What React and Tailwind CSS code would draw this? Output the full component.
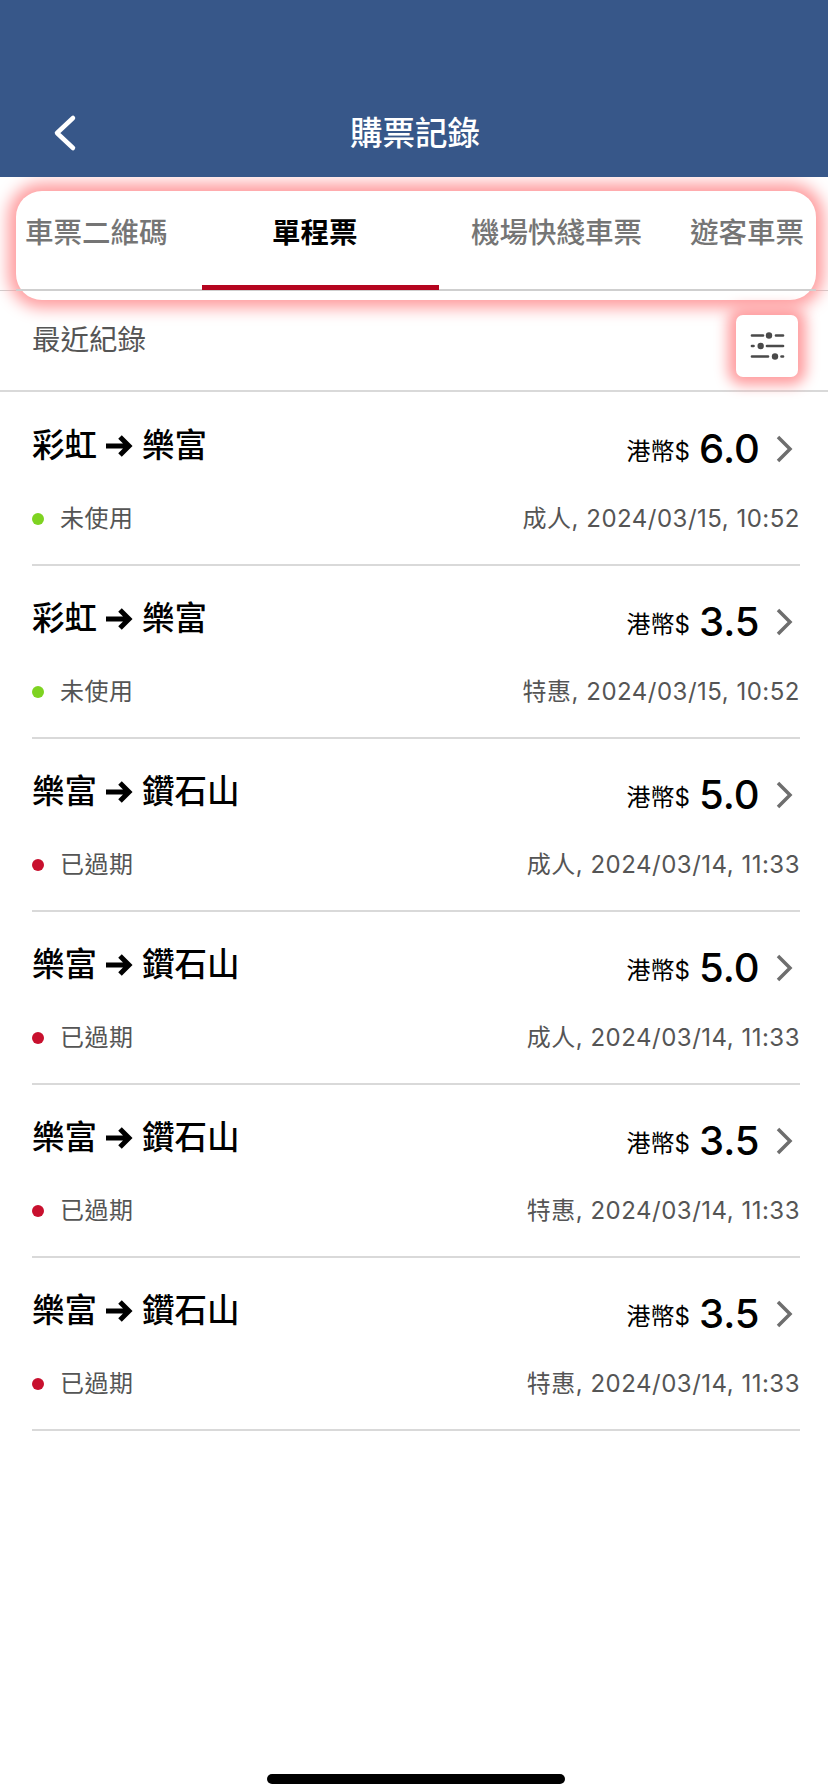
import React from "react";

const tickets = [
	{route: ["彩虹", "樂富"], price: "6.0", used: false, info: "成人, 2024/03/15, 10:52"},
	{route: ["彩虹", "樂富"], price: "3.5", used: false, info: "特惠, 2024/03/15, 10:52"},
	{route: ["樂富", "鑽石山"], price: "5.0", used: true, info: "成人, 2024/03/14, 11:33"},
	{route: ["樂富", "鑽石山"], price: "5.0", used: true, info: "成人, 2024/03/14, 11:33"},
	{route: ["樂富", "鑽石山"], price: "3.5", used: true, info: "特惠, 2024/03/14, 11:33"},
	{route: ["樂富", "鑽石山"], price: "3.5", used: true, info: "特惠, 2024/03/14, 11:33"},
];

function TicketRow({ticket}) {
	return (
		<div className="h-[173px] border-b-2 border-[#d9d9d9] flex flex-col">
			<div className="h-[111px] flex items-start justify-between">
				<div className="mt-[33px] flex items-center text-[32.5px] leading-[40px] font-medium text-black">
					<span>{ticket.route[0]}</span>
					<svg width="28" height="24" viewBox="0 0 28 24" className="ml-[8px] mr-[9px]">
						<path d="M1 12H24M15 3l9 9-9 9" fill="none" stroke="#000" strokeWidth="5" />
					</svg>
					<span>{ticket.route[1]}</span>
				</div>
				<div className="mt-[32px] flex items-center text-black">
					<span className="text-[24px] leading-[30px] mt-[6px] mr-[9px]">港幣$</span>
					<span className="text-[40px] leading-[48px] font-medium w-[58px] text-right">{ticket.price}</span>
					<svg width="18" height="28" viewBox="0 0 18 28" className="ml-[18px] mr-[7px]">
						<path d="M3 2l12 12L3 26" fill="none" stroke="#6e6e6e" strokeWidth="3.5" />
					</svg>
				</div>
			</div>
			<div className="flex items-center justify-between text-[24px] leading-[30px] text-[#555555] tracking-[0.5px]">
				<div className="flex items-center">
					<span className={ticket.used ? "w-[12px] h-[12px] rounded-full bg-[#c8102e] -mt-[1px]" : "w-[12px] h-[12px] rounded-full bg-[#7ed321] -mt-[1px]"}></span>
					<span className="ml-[16px]">{ticket.used ? "已過期" : "未使用"}</span>
				</div>
				<span>{ticket.info}</span>
			</div>
		</div>
	);
}

export default function App() {
	return (
		<div className="w-[828px] h-[1790px] bg-white relative overflow-hidden font-['Inter','Noto_Sans_CJK_TC',sans-serif]">
			<header className="relative z-10 h-[177px] bg-[#375789] flex items-end justify-center pb-[21px] pl-[2px]">
				<svg width="30" height="40" viewBox="0 0 30 40" className="absolute left-[50px] top-[113px]">
					<path d="M23 5L7 20l16 15" fill="none" stroke="#fff" strokeWidth="4.5" strokeLinecap="round" strokeLinejoin="round" />
				</svg>
				<h1 className="text-[32.5px] leading-[44px] font-medium text-white">購票記錄</h1>
			</header>

			<section className="relative h-[114px] border-b border-[#cfcfcf]">
				{/* highlight sits behind the tabs */}
				<div className="absolute left-[16px] right-[12px] top-[14px] h-[109px] rounded-[26px] bg-white shadow-[0_0_16px_8px_#ff9c9e]"></div>
				<div className="absolute left-[16px] right-[12px] top-[112px] h-[2px] bg-[#cfcfcf]"></div>
				<div className="relative flex h-[113px] pt-[36px] text-[28.5px] leading-[40px] font-medium text-[#757575]">
					<span className="ml-[25px]">車票二維碼</span>
					<div className="ml-[34.5px] w-[237px] h-[77px] border-b-[5px] border-[#b5051f] text-black font-bold pl-[70px]">單程票</div>
					<span className="ml-[32px]">機場快綫車票</span>
					<span className="ml-[48px]">遊客車票</span>
				</div>
			</section>

			<div className="relative h-[101px] border-b-2 border-[#d9d9d9] flex items-start justify-between pl-[32px] pr-[30px]">
				<span className="mt-[29px] text-[28.5px] leading-[40px] text-[#555555]">最近紀錄</span>
				<button className="mt-[24px] w-[62px] h-[62px] rounded-[7px] bg-white shadow-[0_0_14px_8px_#ff9c9e] flex items-center justify-center">
					<svg width="36" height="30" viewBox="0 0 36 30">
						<g stroke="#4a4a4a" strokeWidth="2.7" strokeLinecap="round">
							<path d="M3 4.5H14M27 4.5H34" />
							<path d="M3 15H4.5M18 15H34" />
							<path d="M3 25.5H19M32.5 25.5H34" />
						</g>
						<g fill="#4a4a4a">
							<circle cx="20" cy="4.5" r="3.2" />
							<circle cx="11.7" cy="15" r="3.2" />
							<circle cx="26" cy="25.5" r="3.2" />
						</g>
					</svg>
				</button>
			</div>

			<div className="pl-[32px] pr-[28px] mt-[1px]">
				{tickets.map((ticket, i) => (
					<TicketRow key={i} ticket={ticket} />
				))}
			</div>

			<div className="absolute left-[267px] top-[1774px] w-[298px] h-[10px] rounded-full bg-black"></div>
		</div>
	);
}
